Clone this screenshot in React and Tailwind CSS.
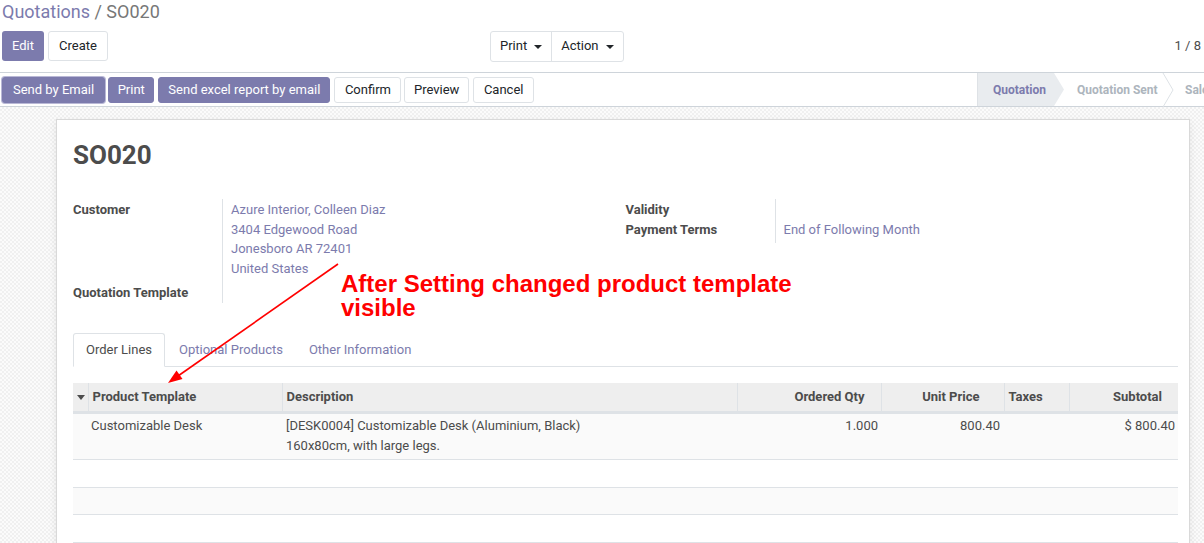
import React from "react";

function Caret() {
  return <span className="inline-block ml-[7px] align-middle border-t-[4px] border-t-current border-x-[4px] border-x-transparent" />;
}

function Btn({ primary, children, className = "" }) {
  return (
    <button
      className={
        "h-[26px] rounded-[3px] text-[13px] leading-none " +
        (primary ? "bg-[#7c7bad] text-white border border-[#7c7bad] " : "bg-white text-[#212529] border border-[#dee2e6] ") +
        className
      }
    >
      {children}
    </button>
  );
}

export default function App() {
  const rows = [0, 1, 2, 3];
  return (
    <div className="w-[1204px] h-[543px] overflow-hidden bg-white text-[13px] text-[#4c4c4c] relative" style={{ fontFamily: "Roboto, 'Liberation Sans', sans-serif" }}>
      {/* control panel */}
      <div className="border-b border-[#ced4da] pb-[11px]">
        <div className="pl-[2px] h-[24px] text-[18px] leading-[24px]">
          <span className="text-[#7c7bad]">Quotations</span>
          <span className="text-[#777]"> / SO020</span>
        </div>
        <div className="flex items-center mt-[7px] pl-[2px] pr-[3px] h-[30px]">
          <div className="flex gap-[4px] w-[488px]">
            <button className="h-[30px] px-[10px] rounded-[3px] bg-[#7c7bad] text-white text-[13px]">Edit</button>
            <button className="h-[30px] px-[10px] rounded-[3px] bg-white border border-[#dee2e6] text-[#212529] text-[13px]">Create</button>
          </div>
          <div className="flex border border-[#dee2e6] rounded-[3px] h-[31px]">
            <button className="pl-[9px] pr-[9px] text-[13px] text-[#212529] border-r border-[#dee2e6]">Print<Caret /></button>
            <button className="pl-[9px] pr-[9px] text-[13px] text-[#212529]">Action<Caret /></button>
          </div>
          <div className="ml-auto text-[13px] text-[#4c4c4c]">1 / 8</div>
        </div>
      </div>

      {/* status bar */}
      <div className="flex items-center h-[34px] border-b border-[#ced4da] pl-[2px]">
        <div className="flex items-center">
          <Btn primary className="ring-1 ring-[#b9b8d6] px-[10px]">Send by Email</Btn>
          <Btn primary className="ml-[3px] px-[8.5px]">Print</Btn>
          <Btn primary className="ml-[4px] px-[9px]">Send excel report by email</Btn>
          <Btn className="ml-[4px] px-[9.5px]">Confirm</Btn>
          <Btn className="ml-[3px] px-[8.5px]">Preview</Btn>
          <Btn className="ml-[4px] px-[10px]">Cancel</Btn>
        </div>
        <div className="ml-auto flex h-full border-l border-[#dee2e6] w-[227px] text-[12px] font-bold">
          <div className="shrink-0 flex items-center pl-[15px] bg-[#e9ecef] text-[#7c7bad] [clip-path:polygon(0_0,calc(100%-10px)_0,100%_50%,calc(100%-10px)_100%,0_100%)] w-[86px]">Quotation</div>
          <div className="shrink-0 relative flex items-center pl-[13px] w-[110px] text-[#adb5bd] whitespace-nowrap">
            Quotation Sent
            <svg className="absolute right-0 top-0" width="12" height="34" viewBox="0 0 12 34"><path d="M1 0 L11 17 L1 34" fill="none" stroke="#dee2e6" /></svg>
          </div>
          <div className="shrink-0 flex items-center pl-[11px] text-[#adb5bd] whitespace-nowrap">Sales Order</div>
        </div>
      </div>

      {/* sheet area */}
      <div className="h-full pl-[56px] pr-[14px] pt-[12px] bg-[repeating-conic-gradient(#f0f0f0_0%_25%,#fbfbfb_0%_50%)] bg-[length:4px_4px]">
        <div className="bg-white border border-[#d9d9d9] h-[500px] pl-[16px] pr-[11px] pt-[19px] shadow-[0_3px_8px_rgba(0,0,0,0.08)]">
          <h1 className="text-[26px] font-bold text-[#4c4c4c] leading-[32px]">SO020</h1>

          <div className="grid grid-cols-2 mt-[28px]">
            <div>
              <div className="flex">
                <div className="w-[149px] pt-[1px] font-bold leading-[20px]">Customer</div>
                <div className="border-l border-[#dee2e6] pl-[8px] pt-[1px] text-[#7c7bad] leading-[19.7px]">
                  <div>Azure Interior, Colleen Diaz</div>
                  <div>3404 Edgewood Road</div>
                  <div>Jonesboro AR 72401</div>
                  <div>United States</div>
                </div>
              </div>
              <div className="flex">
                <div className="w-[149px] pt-[4px] font-bold leading-[20px]">Quotation Template</div>
                <div className="border-l border-[#dee2e6] h-[24px]" />
              </div>
            </div>
            <div>
              <div className="flex">
                <div className="w-[149px] pt-[1px] font-bold leading-[20px]">
                  <div>Validity</div>
                  <div>Payment Terms</div>
                </div>
                <div className="border-l border-[#dee2e6] pl-[8px] pt-[1px] pb-[3px] text-[#7c7bad] leading-[20px]">
                  <div>&nbsp;</div>
                  <div>End of Following Month</div>
                </div>
              </div>
            </div>
          </div>

          {/* tabs */}
          <div className="flex mt-[30px] border-b border-[#dee2e6] h-[34px]">
            <div className="px-[12px] flex items-center border border-[#dee2e6] border-b-white -mb-px rounded-t-[3px] text-[#4c4c4c]">Order Lines</div>
            <div className="px-[14px] flex items-center text-[#7c7bad]">Optional Products</div>
            <div className="px-[12px] flex items-center text-[#7c7bad]">Other Information</div>
          </div>

          {/* table */}
          <table className="w-full mt-[16px] border-collapse">
            <thead>
              <tr className="bg-[#eeeeee] h-[30px] font-bold text-[#4c4c4c] border-b-[3px] border-[#dee2e6]">
                <th className="w-[15px] border-r border-[#dee2e6] text-left pl-[4px]">
                  <span className="inline-block align-middle border-t-[5px] border-t-[#4c4c4c] border-x-[4px] border-x-transparent" />
                </th>
                <th className="w-[194px] text-left pl-[4px] border-r border-[#dee2e6]">Product Template</th>
                <th className="w-[455px] text-left pl-[4px] border-r border-[#dee2e6]">Description</th>
                <th className="w-[144px] text-right pr-[16px] border-r border-[#dee2e6]">Ordered Qty</th>
                <th className="w-[123px] text-right pr-[24px] border-r border-[#dee2e6]">Unit Price</th>
                <th className="w-[65px] text-left pl-[4px] border-r border-[#dee2e6]">Taxes</th>
                <th className="text-right pr-[16px]">Subtotal</th>
              </tr>
            </thead>
            <tbody>
              <tr className="bg-[#fafafa] border-b border-[#dee2e6] align-top leading-[20px]">
                <td />
                <td className="pl-[3px] pt-[2px]">Customizable Desk</td>
                <td className="pl-[4px] pt-[2px] pb-[3px]">
                  <div>[DESK0004] Customizable Desk (Aluminium, Black)</div>
                  <div>160x80cm, with large legs.</div>
                </td>
                <td className="text-right pr-[3px] pt-[2px]">1.000</td>
                <td className="text-right pr-[4px] pt-[2px]">800.40</td>
                <td />
                <td className="text-right pr-[3px] pt-[2px]">$ 800.40</td>
              </tr>
              {rows.map((r) => (
                <tr key={r} className={"h-[27.5px] border-b border-[#dee2e6] " + (r % 2 === 0 ? "bg-white" : "bg-[#fafafa]")}>
                  <td colSpan={7} />
                </tr>
              ))}
            </tbody>
          </table>
        </div>
      </div>

      {/* annotation */}
      <div className="absolute left-[341px] top-[272px] text-[#ff0000] font-bold text-[24px] leading-[24px]" style={{ fontFamily: "'Liberation Sans', Arial, sans-serif" }}>
        <div>After Setting changed product template</div>
        <div>visible</div>
      </div>
      <svg className="absolute left-0 top-0 pointer-events-none" width="1204" height="543">
        <line x1="338" y1="264" x2="178" y2="376" stroke="#ff0000" strokeWidth="1.6" />
        <polygon points="168,383 182.5,379 176.5,370.5" fill="#ff0000" />
      </svg>
    </div>
  );
}
